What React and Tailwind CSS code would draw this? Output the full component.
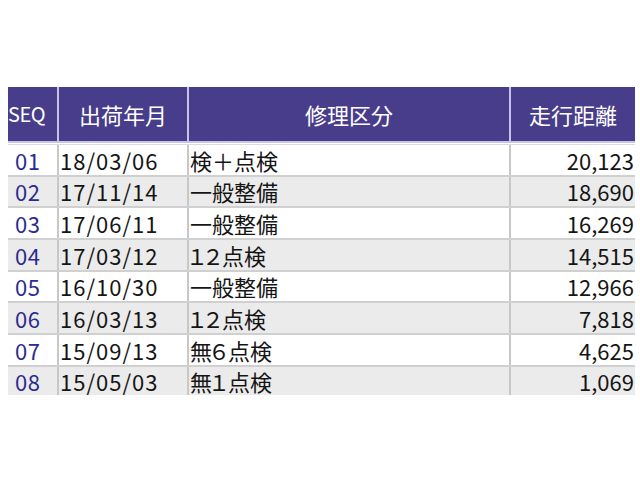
import React from "react";

const rows = [
  ["01", "18/03/06", "検＋点検", "20,123"],
  ["02", "17/11/14", "一般整備", "18,690"],
  ["03", "17/06/11", "一般整備", "16,269"],
  ["04", "17/03/12", "１２点検", "14,515"],
  ["05", "16/10/30", "一般整備", "12,966"],
  ["06", "16/03/13", "１２点検", "7,818"],
  ["07", "15/09/13", "無６点検", "4,625"],
  ["08", "15/05/03", "無１点検", "1,069"],
];

function Cat({ text }) {
  return (
    <span className="whitespace-nowrap">
      {Array.from(text).map((ch, i) =>
        /[０-９]/.test(ch) ? (
          <span key={i} className="inline-block w-[16px] overflow-visible">
            <span className="inline-block ml-[-4px] tracking-[-6px]">{ch}</span>
          </span>
        ) : (
          <span key={i}>{ch}</span>
        )
      )}
    </span>
  );
}

export default function App() {
  return (
    <div
      className="w-[640px] h-[480px] bg-white overflow-hidden pt-[87px] pl-[8px]"
      style={{ fontFamily: '"Noto Sans CJK JP", "DejaVu Sans", sans-serif' }}
    >
      <div className="w-[627px]">
        <div className="flex h-[54px] bg-[#483d8b] text-white text-[22px] leading-none">
          <div className="w-[49px] flex items-center">
            <span className="text-[20px] tracking-[-0.5px]">SEQ</span>
          </div>
          <div className="w-[130px] border-l-2 border-[#c9c2ea] flex items-center justify-center">出荷年月</div>
          <div className="w-[322px] border-l-2 border-[#c9c2ea] flex items-center justify-center">修理区分</div>
          <div className="w-[126px] border-l-2 border-[#c9c2ea] flex items-center justify-center">走行距離</div>
        </div>
        <div className="h-[2px] bg-[#c9c2ea]"></div>
        <div className="h-[1px] bg-white"></div>
        <div className="h-[1px] bg-[#dcdcdc]"></div>
        {rows.map((r, i) => {
          const last = i === rows.length - 1;
          return (
            <div
              key={i}
              className={`flex ${last ? "h-[28.3px]" : "h-[31.67px] border-b-2 border-[#d0d0d0]"} text-[22px] leading-none text-[#151515] ${i % 2 === 1 ? "bg-[#ebebeb]" : "bg-white"}`}
            >
              <div className="w-[49px] flex items-center pl-[7px] text-[#2b2b90] tracking-[0.5px]">{r[0]}</div>
              <div className="w-[130px] border-l-2 border-[#c8c8c8] flex items-center pl-[1px] tracking-[1px]">{r[1]}</div>
              <div className="w-[322px] border-l-2 border-[#c8c8c8] flex items-center pl-[1px]"><Cat text={r[2]} /></div>
              <div className="w-[126px] border-l-2 border-[#c8c8c8] flex items-center justify-end pr-[1px]">{r[3]}</div>
            </div>
          );
        })}
      </div>
    </div>
  );
}
